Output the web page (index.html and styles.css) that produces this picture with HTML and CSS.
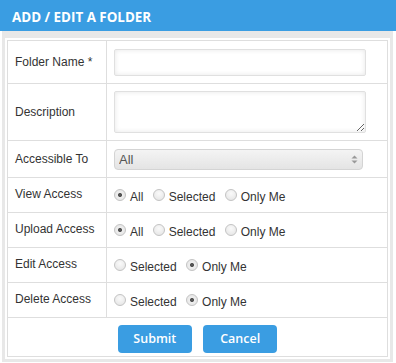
FILE: index.html
```html
<!DOCTYPE html>
<html lang="en">
<head>
    <meta charset="UTF-8">
    <meta name="viewport" content="width=device-width, initial-scale=1.0">
    <title>Add / Edit a Folder</title>
    <link rel="stylesheet" href="styles.css">
</head>
<body>
    <header class="modal-header">ADD / EDIT A FOLDER</header>

    <div class="modal-body">
        <table class="form-table">
            <tr class="row-name">
                <td class="label">Folder Name *</td>
                <td class="field"><input type="text" class="text-input"></td>
            </tr>
            <tr class="row-desc">
                <td class="label">Description</td>
                <td class="field"><textarea class="text-area"></textarea></td>
            </tr>
            <tr class="row-select">
                <td class="label">Accessible To</td>
                <td class="field">
                    <div class="select-wrap">
                        <select class="select-input">
                            <option>All</option>
                            <option>Selected</option>
                            <option>Only Me</option>
                        </select>
                        <svg class="select-arrows" width="7" height="9" viewBox="0 0 7 9">
                            <path d="M3.5 0.5 L6.5 3.5 L0.5 3.5 Z" fill="#999"/>
                            <path d="M3.5 8.5 L6.5 5.5 L0.5 5.5 Z" fill="#999"/>
                        </svg>
                    </div>
                </td>
            </tr>
            <tr class="row-radio">
                <td class="label">View Access</td>
                <td class="field">
                    <label class="radio"><input type="radio" name="view" checked> All</label>
                    <label class="radio"><input type="radio" name="view"> Selected</label>
                    <label class="radio"><input type="radio" name="view"> Only Me</label>
                </td>
            </tr>
            <tr class="row-radio">
                <td class="label">Upload Access</td>
                <td class="field">
                    <label class="radio"><input type="radio" name="upload" checked> All</label>
                    <label class="radio"><input type="radio" name="upload"> Selected</label>
                    <label class="radio"><input type="radio" name="upload"> Only Me</label>
                </td>
            </tr>
            <tr class="row-radio">
                <td class="label">Edit Access</td>
                <td class="field">
                    <label class="radio"><input type="radio" name="edit"> Selected</label>
                    <label class="radio"><input type="radio" name="edit" checked> Only Me</label>
                </td>
            </tr>
            <tr class="row-radio">
                <td class="label">Delete Access</td>
                <td class="field">
                    <label class="radio"><input type="radio" name="delete"> Selected</label>
                    <label class="radio"><input type="radio" name="delete" checked> Only Me</label>
                </td>
            </tr>
            <tr class="row-actions">
                <td colspan="2" class="actions">
                    <button class="btn">Submit</button>
                    <button class="btn">Cancel</button>
                </td>
            </tr>
        </table>
    </div>
</body>
</html>
```

FILE: styles.css
```css
:root {
    --primary-color: #3a9de2;
    --border-light: #dedede;
    --frame-gray: #e8e8e8;
    --text-color: #333;
}

* {
    margin: 0;
    padding: 0;
    box-sizing: border-box;
}

body {
    background-color: white;
    color: var(--text-color);
    font-family: "Liberation Sans", Arial, sans-serif;
    font-size: 12px;
}

.modal-header {
    height: 31px;
    background-color: var(--primary-color);
    color: white;
    font-family: "Open Sans", sans-serif;
    font-weight: 700;
    font-size: 13.4px;
    line-height: 34px;
    padding-left: 12px;
}

.modal-body {
    margin: 0 3px 0 2px;
    border: 3px solid var(--frame-gray);
    border-top-width: 7px;
    padding: 2px;
}

.form-table {
    width: 100%;
    border-collapse: collapse;
    border: 1px solid var(--border-light);
}

.form-table td {
    border: 1px solid var(--border-light);
    vertical-align: middle;
}

.label {
    width: 99px;
    padding-left: 7px;
}

.field {
    padding-left: 7px;
}

.row-name td { height: 43px; }
.row-desc td { height: 57px; }
.row-select td { height: 37px; }
.row-radio td { height: 35px; }
.row-actions td { height: 39px; }

.row-radio .label {
    padding-bottom: 3px;
}

.text-input,
.text-area {
    display: block;
    width: 252px;
    border: 1px solid #e0e0e0;
    border-radius: 2px;
    box-shadow: inset 0 0 5px rgba(0,0,0,0.1);
    background-color: white;
    font-family: inherit;
    font-size: 12px;
    outline: none;
}

.text-input {
    height: 27px;
}

.text-area {
    height: 42px;
    resize: vertical;
}

.select-wrap {
    position: relative;
    width: 249px;
}

.select-input {
    appearance: none;
    -webkit-appearance: none;
    display: block;
    width: 100%;
    height: 21px;
    border: 1px solid #d4d4d4;
    border-radius: 4px;
    background: linear-gradient(#f4f4f4, #e4e4e4);
    color: #555;
    font-family: inherit;
    font-size: 13px;
    padding-left: 4px;
    outline: none;
}

.select-arrows {
    position: absolute;
    right: 5px;
    top: 6px;
}

.radio {
    display: inline-flex;
    align-items: center;
    gap: 4px;
    margin-right: 6px;
    padding-top: 5px;
}

.radio input {
    appearance: none;
    -webkit-appearance: none;
    width: 12px;
    height: 12px;
    border-radius: 50%;
    border: 1px solid #c4c4c4;
    background: radial-gradient(circle at 50% 35%, #fafafa, #e2e2e2);
    position: relative;
    top: -2px;
}

.radio input:checked {
    background: radial-gradient(circle, #555 0, #555 1.6px, #eee 2.4px, #e2e2e2 100%);
}

.actions {
    text-align: center;
    padding-top: 3px;
}

.btn {
    width: 74px;
    height: 28px;
    border: none;
    border-radius: 4px;
    background-color: var(--primary-color);
    color: white;
    font-family: "Open Sans", sans-serif;
    font-weight: 600;
    font-size: 12.5px;
    cursor: pointer;
}

.btn + .btn {
    margin-left: 8px;
}
```
